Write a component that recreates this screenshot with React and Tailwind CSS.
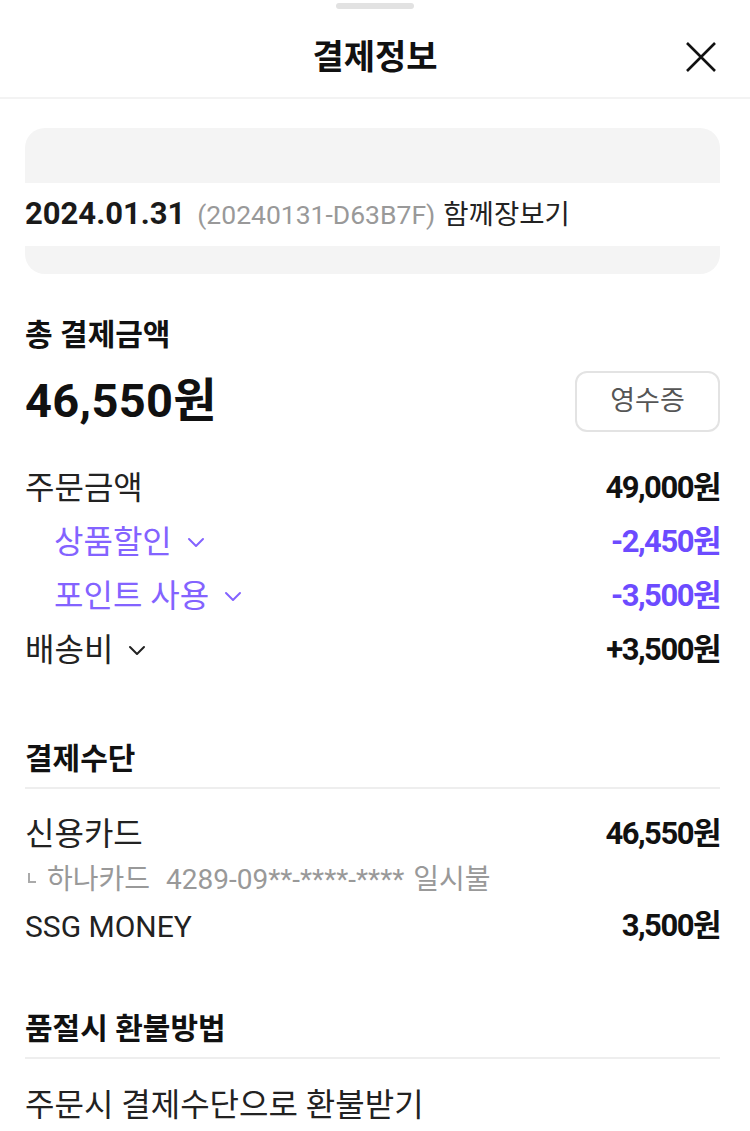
import React from "react";

const FONT = { fontFamily: "Roboto, 'Noto Sans CJK KR', 'Noto Sans', sans-serif" };

function Chevron({ color = "#222" }) {
  return (
    <svg width="18" height="11" viewBox="0 0 18 11" fill="none" className="ml-[15px]">
      <polyline points="2,2 9,9 16,2" stroke={color} strokeWidth="2" strokeLinecap="round" strokeLinejoin="round" />
    </svg>
  );
}

function Row({ label, value, purple, indent, chevron, latin }) {
  const lc = purple ? "text-[#8363ff]" : "text-[#222]";
  const vc = purple ? "text-[#6c4bff]" : "text-[#111]";
  return (
    <div className={`flex h-[54px] items-center justify-between ${indent ? "pl-[29px]" : ""}`}>
      <div className={`flex items-center ${latin ? "text-[30px]" : "text-[32px]"} ${lc}`}>
        <span>{label}</span>
        {chevron && <Chevron color={purple ? "#8363ff" : "#222"} />}
      </div>
      <div className={`text-[31px] font-bold tracking-[-1.5px] ${vc}`}>{value}</div>
    </div>
  );
}

export default function App() {
  return (
    <div className="w-[750px] min-h-[1131px] bg-white overflow-hidden" style={FONT}>
      {/* handle */}
      <div className="flex justify-center pt-[3px]">
        <div className="h-[6px] w-[78px] rounded-full bg-[#e2e2e2]" />
      </div>
      {/* header */}
      <div className="flex h-[90px] items-center justify-between border-b-2 border-[#f3f3f3] pl-[34px] pr-[34px] pt-[8px]">
        <div className="w-[30px]" />
        <div className="text-[34px] font-bold text-[#111]">결제정보</div>
        <svg width="30" height="30" viewBox="0 0 30 30" fill="none">
          <path d="M1 1 L29 29 M29 1 L1 29" stroke="#111" strokeWidth="2.6" />
        </svg>
      </div>

      <div className="pl-[25px] pr-[30px]">
        {/* card */}
        <div className="mt-[29px] overflow-hidden rounded-[20px] bg-[#f4f4f4] pt-[55px] pb-[28px]">
          <div className="flex h-[63px] items-center bg-white">
            <span className="text-[31px] font-bold text-[#1a1a1a]">2024.01.31</span>
            <span className="ml-[12px] text-[26.5px] text-[#999]">(20240131-D63B7F)</span>
            <span className="ml-[8px] text-[27.5px] text-[#222]">함께장보기</span>
          </div>
        </div>

        {/* total */}
        <div className="mt-[41px] text-[30px] font-bold leading-[40px] text-[#111]">총 결제금액</div>
        <div className="mt-[16px] flex h-[61px] items-center justify-between">
          <div className="text-[47px] font-bold tracking-[0.3px] text-[#111]">46,550원</div>
          <div className="flex h-[61px] w-[145px] items-center justify-center rounded-[12px] border-2 border-[#e3e3e3] text-[27px] text-[#555]">
            영수증
          </div>
        </div>

        <div className="mt-[29px]">
          <Row label="주문금액" value="49,000원" />
          <Row label="상품할인" value="-2,450원" purple indent chevron />
          <Row label="포인트 사용" value="-3,500원" purple indent chevron />
          <Row label="배송비" value="+3,500원" chevron />
        </div>

        {/* payment method */}
        <div className="mt-[62px] text-[30px] font-bold leading-[40px] text-[#111]">결제수단</div>
        <div className="mt-[8px] h-[2px] bg-[#eeeeee]" />
        <div className="mt-[18px]">
          <Row label="신용카드" value="46,550원" />
          <div className="flex h-[38px] items-center text-[28px] text-[#999]">
            <span className="mb-[4px] ml-[3px] inline-block h-[10px] w-[8px] border-b-2 border-l-2 border-[#aaa]" />
            <span className="ml-[11px]">하나카드</span>
            <span className="ml-[16px]">4289-09**-****-****</span>
            <span className="ml-[9px]">일시불</span>
          </div>
          <Row label="SSG MONEY" value="3,500원" latin />
        </div>

        {/* refund */}
        <div className="mt-[56px] text-[30px] font-bold leading-[40px] text-[#111]">품절시 환불방법</div>
        <div className="mt-[8px] h-[2px] bg-[#eeeeee]" />
        <div className="mt-[19px] flex h-[54px] items-center text-[32px] text-[#222]">주문시 결제수단으로 환불받기</div>
      </div>
    </div>
  );
}
